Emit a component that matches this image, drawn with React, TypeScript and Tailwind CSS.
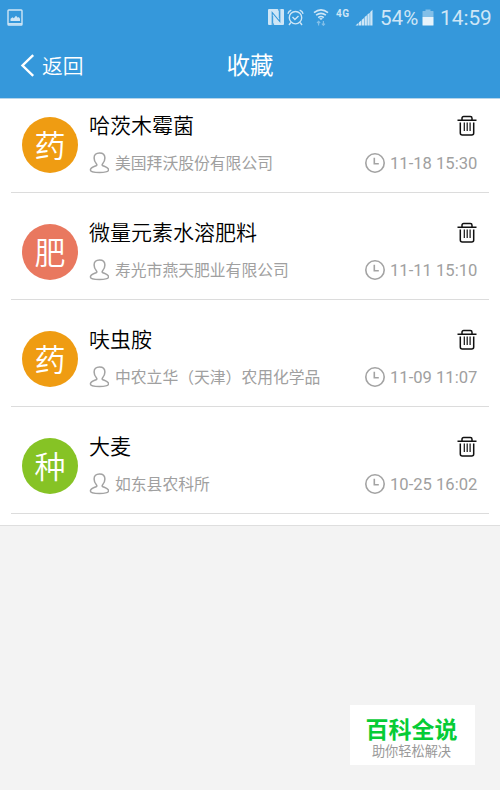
import React from 'react';

interface Favorite {
  badge: string;
  color: string;
  title: string;
  company: string;
  time: string;
}

const favorites: Favorite[] = [
  { badge: '药', color: 'bg-[#ef9c12]', title: '哈茨木霉菌', company: '美国拜沃股份有限公司', time: '11-18 15:30' },
  { badge: '肥', color: 'bg-[#e9785f]', title: '微量元素水溶肥料', company: '寿光市燕天肥业有限公司', time: '11-11 15:10' },
  { badge: '药', color: 'bg-[#ef9c12]', title: '呋虫胺', company: '中农立华（天津）农用化学品', time: '11-09 11:07' },
  { badge: '种', color: 'bg-[#86c325]', title: '大麦', company: '如东县农科所', time: '10-25 16:02' },
];

const UserIcon: React.FC = () => (
  <svg className="h-[22px] w-5 shrink-0" viewBox="0 0 20 22" fill="none" stroke="#a3a3a3" strokeWidth="1.500" strokeLinejoin="round">
    <path d="M10.500.9c-3.500 0-5.400 2.100-5.400 5.100 0 2.500 1 4.500 2.400 6 .6.7.4 1.400-.4 1.700-3 1.200-5.700 1.700-5.700 4.300 0 1.600 2.200 2.500 9.100 2.500s9.100-.9 9.100-2.500c0-2.600-2.700-3.100-5.700-4.300-.8-.3-1-1-.4-1.700 1.400-1.500 2.400-3.500 2.400-6 0-3-1.900-5.100-5.400-5.100Z" />
  </svg>
);

const ClockIcon: React.FC = () => (
  <svg className="size-5 shrink-0" viewBox="0 0 20 20" fill="none" stroke="#a3a3a3" strokeWidth="1.600">
    <circle cx="10" cy="10" r="9.200" />
    <path d="M9.300 4.800v5.900h4.500" />
  </svg>
);

const TrashIcon: React.FC = () => (
  <svg className="h-[21px] w-5" viewBox="0 0 20 21" fill="none" stroke="#111" strokeWidth="1.500">
    <path d="M.5 5.200h19M5 5V3.200Q5 1.500 6.700 1.500h6.600Q15 1.500 15 3.200V5" />
    <path d="M3.300 7.500V18q0 2 2 2h9.400q2 0 2-2V7.500" />
    <path d="M7.300 7.500v8.500M10.200 7.500v8.500M13.100 7.500v8.500" strokeWidth="1.200" />
  </svg>
);

const StatusBar: React.FC = () => (
  <div className="flex h-[34px] items-center text-[#cfe6f6]">
    <svg className="ml-[7px] h-[17px] w-4" viewBox="0 0 16 17" fill="none" stroke="currentColor">
      <rect x="1" y="1" width="14" height="15" rx=".8" strokeWidth="1.400" />
      <path d="M1 14.800h14" strokeWidth="1.500" />
      <path d="M3.500 12V9.800l2-1.500 1.300 1L9 6.800l1.800 1.900 1-.6 1.200 1.700V12Z" fill="currentColor" stroke="none" />
    </svg>
    {/* NFC */}
    <svg className="ml-[244px] h-[18px] w-[18px]" viewBox="0 0 18 18" fill="none" stroke="currentColor">
      <rect x="1" y="1" width="16" height="16" rx="1" fill="currentColor" stroke="none" />
      <path d="M5.200 17V4.500l7.600 9V1" stroke="#3598db" strokeWidth="1.100" />
      <path d="M7 17.500 5.700 14.500V8M12.300 10V3.500L11 .5" stroke="#3598db" strokeWidth=".9" />
    </svg>
    {/* Alarm */}
    <svg className="ml-[2px] size-[17px]" viewBox="0 0 17 17" fill="none" stroke="currentColor" strokeWidth="1.400">
      <circle cx="8.500" cy="8.700" r="6.200" />
      <path d="M.9 4.700q.7-2.600 3.400-3.500M16.100 4.700q-.7-2.600-3.400-3.500M3.800 13.500 2 16M13.200 13.500 15 16M5.500 8l2.400 2.400L11.500 7" />
    </svg>
    {/* Wi-Fi */}
    <svg className="ml-[9px] h-[18px] w-4" viewBox="0 0 16 18" fill="none" stroke="currentColor" strokeWidth="1.600">
      <path d="M1 4.600q7-5.400 14 0M3.100 7.200q4.900-3.700 9.800 0M5.200 9.600q2.800-2.100 5.600 0" />
      <path d="m8 12 2-1.500q-2-1.200-4 0Z" fill="currentColor" stroke="none" />
      <path d="M5.600 17.500v-4M4 15l1.600-1.700L7.200 15M10.400 13v4M8.800 15.600l1.600 1.700 1.600-1.700" strokeWidth="1.200" opacity=".5" />
    </svg>
    <span className="mb-[7px] ml-[7px] w-[14px] font-[Roboto] text-[10px] leading-none font-bold tracking-[0.6px]">4G</span>
    <svg className="ml-[5px] h-[17px] w-[18px]" viewBox="0 0 18 17" fill="currentColor">
      <path d="M.5 16.500 3.500 13.800V16.500ZM4 13.200l2.300-1.800v5.100H4ZM6.800 10.700l2.300-1.800v7.600H6.800ZM9.600 8.100l2.300-1.800v10.200H9.600ZM12.400 5.600l2.300-1.800v12.700h-2.300ZM15.200 3.100l2.300-2.400v15.800h-2.300Z" />
    </svg>
    <span className="ml-[7px] w-[38px] pt-[3px] font-[Roboto] text-[20.600px] whitespace-nowrap">54%</span>
    <svg className="ml-[4px] h-[17px] w-3" viewBox="0 0 12 17" fill="currentColor">
      <path d="M1 2h2.500V.5h5V2H11q.5 0 .5.500V8H.5V2.500Q.5 2 1 2Z" opacity=".5" />
      <path d="M.5 8h11v8q0 .5-.5.500H1q-.5 0-.5-.5Z" fill="#e7f3fb" />
    </svg>
    <span className="ml-[6px] pt-[3px] font-[Roboto] text-[20.800px] whitespace-nowrap">14:59</span>
  </div>
);

const FavoriteRow: React.FC<{ item: Favorite }> = ({ item }) => (
  <li className="mx-[11px] mb-[13px] flex h-[94px] border-b border-[#dcdcdc] pr-[11px] pl-[11px]">
    <div className={`mt-[18px] flex size-14 shrink-0 items-center justify-center rounded-full pb-[4px] text-[31px] leading-none font-[350] text-white ${item.color}`}>
      {item.badge}
    </div>
    <div className="ml-[11px] flex-1 pt-[10px]">
      <div className="flex h-8 items-center justify-between">
        <h2 className="pb-[2px] text-[21px] leading-[30px] font-[350] text-black">{item.title}</h2>
        <button className="mr-px" aria-label="删除">
          <TrashIcon />
        </button>
      </div>
      <div className="mt-[11px] flex h-[22px] items-center text-[15.800px] leading-[22px] text-[#a0a0a0]">
        <UserIcon />
        <span className="ml-[6px] whitespace-nowrap">{item.company}</span>
        <div className="ml-auto flex items-center">
          <ClockIcon />
          <span className="ml-[5px] w-[88px] pt-px font-[Roboto] text-[16.600px] whitespace-nowrap">{item.time}</span>
        </div>
      </div>
    </div>
  </li>
);

const App: React.FC = () => {
  return (
    <div className="flex h-[790px] w-[500px] flex-col overflow-hidden bg-[#f3f3f3] font-['Noto_Sans_CJK_SC',sans-serif]">
      <header className="h-[99px] shrink-0 border-b border-[#b5d5eb] bg-[#3598db] text-white">
        <StatusBar />
        <div className="grid h-[62px] grid-cols-3 items-center">
          <button className="flex items-center pl-5 text-[20.800px] leading-none font-[350]">
            <svg className="mr-[7px] h-[23px] w-[15px]" viewBox="0 0 15 23" fill="none" stroke="currentColor" strokeWidth="2.400">
              <path d="M13.200 1.200 2.500 11.500l10.700 10.300" />
            </svg>
            返回
          </button>
          <h1 className="text-center text-[23.500px] leading-none">收藏</h1>
        </div>
      </header>

      <ul className="h-[427px] shrink-0 overflow-hidden border-b border-[#dedede] bg-white">
        {favorites.map((item) => (
          <FavoriteRow key={item.title} item={item} />
        ))}
      </ul>

      <div className="mt-auto mr-[25px] mb-[25px] flex h-[60px] w-[125px] flex-col items-center self-end bg-white pt-[8px] pr-[2px]">
        <p className="text-[23px] leading-[30px] font-bold text-[#06cc36]">百科全说</p>
        <p className="text-[13.200px] leading-[16px] text-[#999]">助你轻松解决</p>
      </div>
    </div>
  );
};

export default App;
